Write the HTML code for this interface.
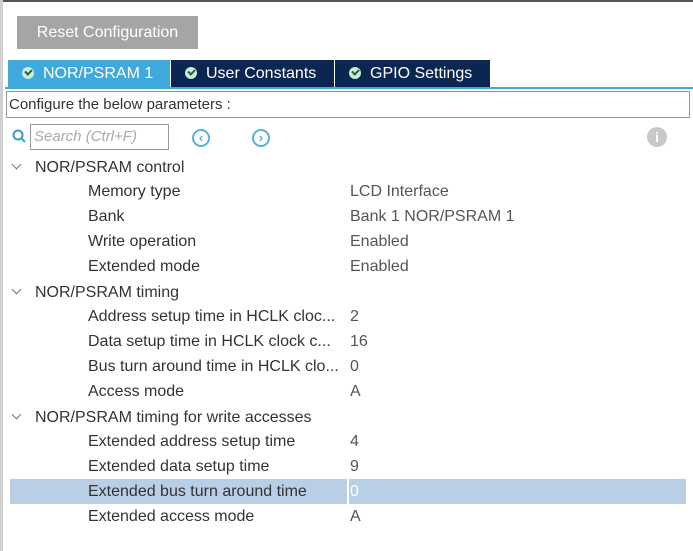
<!DOCTYPE html><html><head><style>
body{margin:0;width:693px;height:551px;background:#fff;position:relative;overflow:hidden;font-family:"Liberation Sans",sans-serif;color:#333}
.a{position:absolute}
.tab{position:absolute;top:60px;height:27px;color:#fff;font-size:16px;line-height:27px;box-sizing:border-box;padding-left:14px}
.ck{display:inline-block;width:12px;height:12px;border-radius:50%;background:#cfe9d6;vertical-align:-1px;margin-right:9px;position:relative}
.ck:after{content:"";position:absolute;left:3px;top:2px;width:5px;height:3px;border-left:2px solid #1a6a3a;border-bottom:2px solid #1a6a3a;transform:rotate(-45deg)}
.r{position:absolute;left:0;width:693px;height:25px;line-height:25px;font-size:16px}
.h span{position:absolute;left:35px}
.h i{position:absolute;left:13px;top:6px;width:6px;height:6px;border-right:1px solid #777;border-bottom:1px solid #777;transform:rotate(45deg)}
.c .k{position:absolute;left:88px}.c .v{position:absolute;left:350px;color:#555}
.circ{position:absolute;width:14px;height:14px;border:2px solid #5ab0dc;border-radius:50%;color:#5ab0dc;font-size:13px;line-height:13px;text-align:center;font-weight:bold}
</style></head><body>
<div class="a" style="left:0;top:0;width:693px;height:2px;background:#555"></div>
<div class="a" style="left:0;top:0;width:3px;height:551px;background:#d0d0d0"></div>
<div class="a" style="left:17px;top:16px;width:181px;height:33px;background:#a5a5a5;color:#fff;font-size:16px;line-height:33px;text-align:center">Reset Configuration</div>
<div class="tab" style="left:8px;width:162px;background:#3fa9dd"><span class="ck"></span>NOR/PSRAM 1</div>
<div class="tab" style="left:171px;width:163px;background:#0b2650"><span class="ck"></span>User Constants</div>
<div class="tab" style="left:335px;width:155px;background:#0b2650"><span class="ck"></span>GPIO Settings</div>
<div class="a" style="left:5px;top:87px;width:688px;height:2px;background:#3fa9dd"></div>
<div class="a" style="left:6px;top:91px;width:684px;border:1px solid #999;font-size:15px;line-height:25px;padding-left:2px;box-sizing:border-box;height:27px">Configure the below parameters :</div>
<svg class="a" style="left:12px;top:129px" width="16" height="16"><circle cx="6" cy="6" r="4.5" fill="none" stroke="#3a9ad0" stroke-width="2"/><path d="M9 9L13 13" stroke="#3a9ad0" stroke-width="2"/></svg>
<div class="a" style="left:30px;top:124px;width:139px;height:26px;border:1px solid #999;box-sizing:border-box;font-size:15px;line-height:24px;padding-left:3px;color:#aaa;font-style:italic">Search (Ctrl+F)</div>
<div class="circ" style="left:192px;top:129px">‹</div>
<div class="circ" style="left:252px;top:129px">›</div>
<div class="a" style="left:647px;top:127px;width:20px;height:20px;border-radius:50%;background:#c8c8c8;color:#fff;font-weight:bold;font-size:14px;line-height:20px;text-align:center">i</div>
<div class="a" style="left:10px;top:479px;width:337px;height:25px;background:#b8cfe5"></div>
<div class="a" style="left:349px;top:479px;width:337px;height:25px;background:#b8cfe5"></div>
<div class="r h" style="top:155px"><i></i><span>NOR/PSRAM control</span></div>
<div class="r c" style="top:179px"><span class="k">Memory type</span><span class="v">LCD Interface</span></div>
<div class="r c" style="top:204px"><span class="k">Bank</span><span class="v">Bank 1 NOR/PSRAM 1</span></div>
<div class="r c" style="top:229px"><span class="k">Write operation</span><span class="v">Enabled</span></div>
<div class="r c" style="top:254px"><span class="k">Extended mode</span><span class="v">Enabled</span></div>
<div class="r h" style="top:280px"><i></i><span>NOR/PSRAM timing</span></div>
<div class="r c" style="top:304px"><span class="k">Address setup time in HCLK cloc...</span><span class="v">2</span></div>
<div class="r c" style="top:329px"><span class="k">Data setup time in HCLK clock c...</span><span class="v">16</span></div>
<div class="r c" style="top:354px"><span class="k">Bus turn around time in HCLK clo...</span><span class="v">0</span></div>
<div class="r c" style="top:379px"><span class="k">Access mode</span><span class="v">A</span></div>
<div class="r h" style="top:405px"><i></i><span>NOR/PSRAM timing for write accesses</span></div>
<div class="r c" style="top:429px"><span class="k">Extended address setup time</span><span class="v">4</span></div>
<div class="r c" style="top:454px"><span class="k">Extended data setup time</span><span class="v">9</span></div>
<div class="r c" style="top:479px"><span class="k">Extended bus turn around time</span><span class="v" style="color:#fff">0</span></div>
<div class="r c" style="top:504px"><span class="k">Extended access mode</span><span class="v">A</span></div>
</body></html>
